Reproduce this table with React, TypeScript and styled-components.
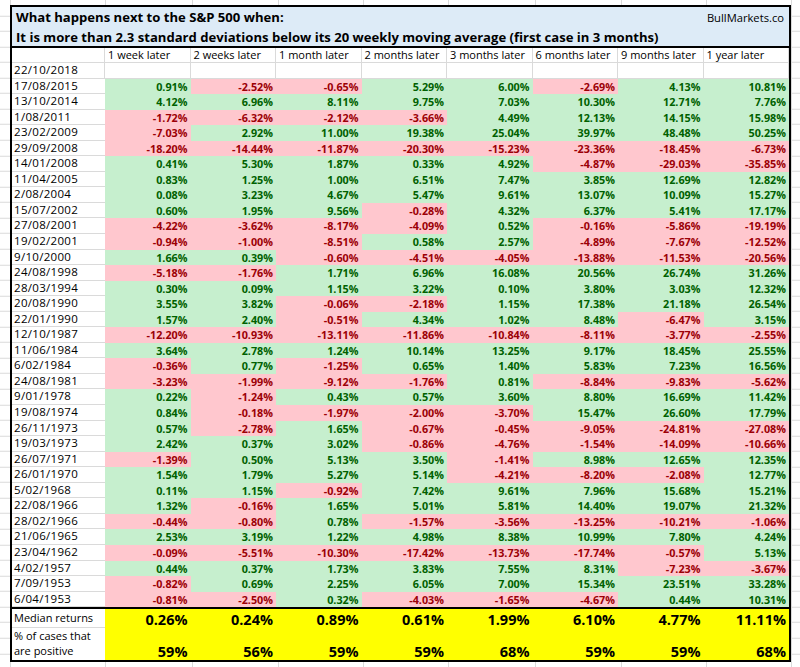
import * as React from 'react'
import styled, {createGlobalStyle, css} from 'styled-components'

const GRID = '#dadada'
const ROW_H = 15.56
const COL_EDGES = [10, 105, 192, 278, 363, 448, 535, 621, 706, 791]

const verticalLines = `linear-gradient(to right, ${COL_EDGES.map(
  x => `transparent ${x}px, ${GRID} ${x}px, ${GRID} ${x + 1}px, transparent ${x + 1}px`
).join(', ')})`

const GlobalStyle = createGlobalStyle`
  html, body {
    margin: 0;
    padding: 0;
    background: #fff;
  }
  body {
    font-family: 'Open Sans', 'Liberation Sans', sans-serif;
    color: #000;
  }
`

const Sheet = styled.div`
  width: 800px;
  height: 667px;
  overflow: hidden;
  padding: 5px 0 0 10px;
  box-sizing: border-box;
  background-image: ${verticalLines},
    repeating-linear-gradient(
      to bottom,
      transparent 0,
      transparent ${ROW_H - 1}px,
      ${GRID} ${ROW_H - 1}px,
      ${GRID} ${ROW_H}px
    );
  background-position: 0 0, 0 0.76px;
`

const Table = styled.div`
  width: 781px;
  box-sizing: border-box;
  border: 2px solid #000;
  background: #fff;
`

const TitleBand = styled.div`
  height: 41px;
  box-sizing: border-box;
  padding: 1px 5px 0 4px;
  background: #ddebf7;
  border-bottom: 2px solid #000;
`

const TitleRow = styled.div`
  display: flex;
  justify-content: space-between;
  align-items: center;
`

const TitleText = styled.div`
  font-size: 13.1px;
  font-weight: 700;
  line-height: 19.5px;
  white-space: nowrap;
`

const Brand = styled.span`
  font-size: 11.2px;
  line-height: 19.5px;
`

const Grid = styled.div<{$top?: boolean}>`
  display: grid;
  grid-template-columns: 93px repeat(8, 85.5px);
  ${_ => _.$top && css`border-top: 2px solid #000;`}
`

const HeadCell = styled.div<{$h: number; $date?: boolean}>`
  height: ${_ => _.$h}px;
  box-sizing: border-box;
  padding-left: ${_ => (_.$date ? 2 : 3)}px;
  border-right: 1px solid ${GRID};
  border-bottom: 1px solid ${GRID};
  font-size: ${_ => (_.$date ? 11.5 : 11)}px;
  letter-spacing: ${_ => (_.$date ? 0.3 : 0)}px;
  line-height: ${_ => _.$h - 1}px;
  white-space: nowrap;
  overflow: hidden;
`

const DateCell = styled.div`
  height: ${ROW_H}px;
  box-sizing: border-box;
  padding-left: 2px;
  border-bottom: 1px solid ${GRID};
  font-size: 11.5px;
  letter-spacing: 0.3px;
  line-height: ${ROW_H - 1}px;
  white-space: nowrap;
`

type Tone = 'pos' | 'neg'

const ValueCell = styled.div<{$tone: Tone}>`
  height: ${ROW_H}px;
  box-sizing: border-box;
  padding-right: 3px;
  text-align: right;
  font-size: 10.8px;
  font-weight: 700;
  line-height: ${ROW_H}px;
  background: ${_ => (_.$tone === 'pos' ? '#c6efce' : '#ffc7ce')};
  color: ${_ => (_.$tone === 'pos' ? '#006100' : '#9c0006')};
`

const SummaryLabel = styled.div<{$h: number; $last?: boolean}>`
  height: ${_ => _.$h}px;
  box-sizing: border-box;
  padding: 0 2px 1px;
  border-bottom: ${_ => (_.$last ? 'none' : `1px solid ${GRID}`)};
  font-size: 11px;
  line-height: 15.5px;
  display: flex;
  align-items: flex-end;
`

const SummaryCell = styled.div<{$h: number}>`
  height: ${_ => _.$h}px;
  box-sizing: border-box;
  padding: 0 3px 0 0;
  background: #ffff00;
  font-size: 14.5px;
  font-weight: 700;
  display: flex;
  align-items: flex-end;
  justify-content: flex-end;
  line-height: 17px;
`

const HEADERS = [
  '1 week later',
  '2 weeks later',
  '1 month later',
  '2 months later',
  '3 months later',
  '6 months later',
  '9 months later',
  '1 year later'
]

const ROWS: [string, number[]][] = [
  ['17/08/2015', [0.91, -2.52, -0.65, 5.29, 6.0, -2.69, 4.13, 10.81]],
  ['13/10/2014', [4.12, 6.96, 8.11, 9.75, 7.03, 10.3, 12.71, 7.76]],
  ['1/08/2011', [-1.72, -6.32, -2.12, -3.66, 4.49, 12.13, 14.15, 15.98]],
  ['23/02/2009', [-7.03, 2.92, 11.0, 19.38, 25.04, 39.97, 48.48, 50.25]],
  ['29/09/2008', [-18.2, -14.44, -11.87, -20.3, -15.23, -23.36, -18.45, -6.73]],
  ['14/01/2008', [0.41, 5.3, 1.87, 0.33, 4.92, -4.87, -29.03, -35.85]],
  ['11/04/2005', [0.83, 1.25, 1.0, 6.51, 7.47, 3.85, 12.69, 12.82]],
  ['2/08/2004', [0.08, 3.23, 4.67, 5.47, 9.61, 13.07, 10.09, 15.27]],
  ['15/07/2002', [0.6, 1.95, 9.56, -0.28, 4.32, 6.37, 5.41, 17.17]],
  ['27/08/2001', [-4.22, -3.62, -8.17, -4.09, 0.52, -0.16, -5.86, -19.19]],
  ['19/02/2001', [-0.94, -1.0, -8.51, 0.58, 2.57, -4.89, -7.67, -12.52]],
  ['9/10/2000', [1.66, 0.39, -0.6, -4.51, -4.05, -13.88, -11.53, -20.56]],
  ['24/08/1998', [-5.18, -1.76, 1.71, 6.96, 16.08, 20.56, 26.74, 31.26]],
  ['28/03/1994', [0.3, 0.09, 1.15, 3.22, 0.1, 3.8, 3.03, 12.32]],
  ['20/08/1990', [3.55, 3.82, -0.06, -2.18, 1.15, 17.38, 21.18, 26.54]],
  ['22/01/1990', [1.57, 2.4, -0.51, 4.34, 1.02, 8.48, -6.47, 3.15]],
  ['12/10/1987', [-12.2, -10.93, -13.11, -11.86, -10.84, -8.11, -3.77, -2.55]],
  ['11/06/1984', [3.64, 2.78, 1.24, 10.14, 13.25, 9.17, 18.45, 25.55]],
  ['6/02/1984', [-0.36, 0.77, -1.25, 0.65, 1.4, 5.83, 7.23, 16.56]],
  ['24/08/1981', [-3.23, -1.99, -9.12, -1.76, 0.81, -8.84, -9.83, -5.62]],
  ['9/01/1978', [0.22, -1.24, 0.43, 0.57, 3.6, 8.8, 16.69, 11.42]],
  ['19/08/1974', [0.84, -0.18, -1.97, -2.0, -3.7, 15.47, 26.6, 17.79]],
  ['26/11/1973', [0.57, -2.78, 1.65, -0.67, -0.45, -9.05, -24.81, -27.08]],
  ['19/03/1973', [2.42, 0.37, 3.02, -0.86, -4.76, -1.54, -14.09, -10.66]],
  ['26/07/1971', [-1.39, 0.5, 5.13, 3.5, -1.41, 8.98, 12.65, 12.35]],
  ['26/01/1970', [1.54, 1.79, 5.27, 5.14, -4.21, -8.2, -2.08, 12.77]],
  ['5/02/1968', [0.11, 1.15, -0.92, 7.42, 9.61, 7.96, 15.68, 15.21]],
  ['22/08/1966', [1.32, -0.16, 1.65, 5.01, 5.81, 14.4, 19.07, 21.32]],
  ['28/02/1966', [-0.44, -0.8, 0.78, -1.57, -3.56, -13.25, -10.21, -1.06]],
  ['21/06/1965', [2.53, 3.19, 1.22, 4.98, 8.38, 10.99, 7.8, 4.24]],
  ['23/04/1962', [-0.09, -5.51, -10.3, -17.42, -13.73, -17.74, -0.57, 5.13]],
  ['4/02/1957', [0.44, 0.37, 1.73, 3.83, 7.55, 8.31, -7.23, -3.67]],
  ['7/09/1953', [-0.82, 0.69, 2.25, 6.05, 7.0, 15.34, 23.51, 33.28]],
  ['6/04/1953', [-0.81, -2.5, 0.32, -4.03, -1.65, -4.67, 0.44, 10.31]]
]

const MEDIANS = [0.26, 0.24, 0.89, 0.61, 1.99, 6.1, 4.77, 11.11]
const POSITIVE = [59, 56, 59, 59, 68, 59, 59, 68]

const pct = (n: number) => `${n.toFixed(2)}%`

export default function App() {
  return (
    <>
      <GlobalStyle />
      <Sheet>
        <Table>
          <TitleBand>
            <TitleRow>
              <TitleText>What happens next to the S&amp;P 500 when:</TitleText>
              <Brand>BullMarkets.co</Brand>
            </TitleRow>
            <TitleText>
              It is more than 2.3 standard deviations below its 20 weekly moving
              average (first case in 3 months)
            </TitleText>
          </TitleBand>

          <Grid>
            <HeadCell $h={15} />
            {HEADERS.map(h => (
              <HeadCell key={h} $h={15}>
                {h}
              </HeadCell>
            ))}
            <HeadCell $h={ROW_H} $date>
              22/10/2018
            </HeadCell>
            {HEADERS.map(h => (
              <HeadCell key={h} $h={ROW_H} />
            ))}
            {ROWS.map(([date, values]) => (
              <React.Fragment key={date}>
                <DateCell>{date}</DateCell>
                {values.map((v, i) => (
                  <ValueCell key={i} $tone={v >= 0 ? 'pos' : 'neg'}>
                    {pct(v)}
                  </ValueCell>
                ))}
              </React.Fragment>
            ))}
          </Grid>

          <Grid $top>
            <SummaryLabel $h={18.5}>Median returns</SummaryLabel>
            {MEDIANS.map((m, i) => (
              <SummaryCell key={i} $h={18.5}>
                {pct(m)}
              </SummaryCell>
            ))}
            <SummaryLabel $h={32} $last>
              % of cases that are positive
            </SummaryLabel>
            {POSITIVE.map((p, i) => (
              <SummaryCell key={i} $h={32}>
                {p}%
              </SummaryCell>
            ))}
          </Grid>
        </Table>
      </Sheet>
    </>
  )
}
